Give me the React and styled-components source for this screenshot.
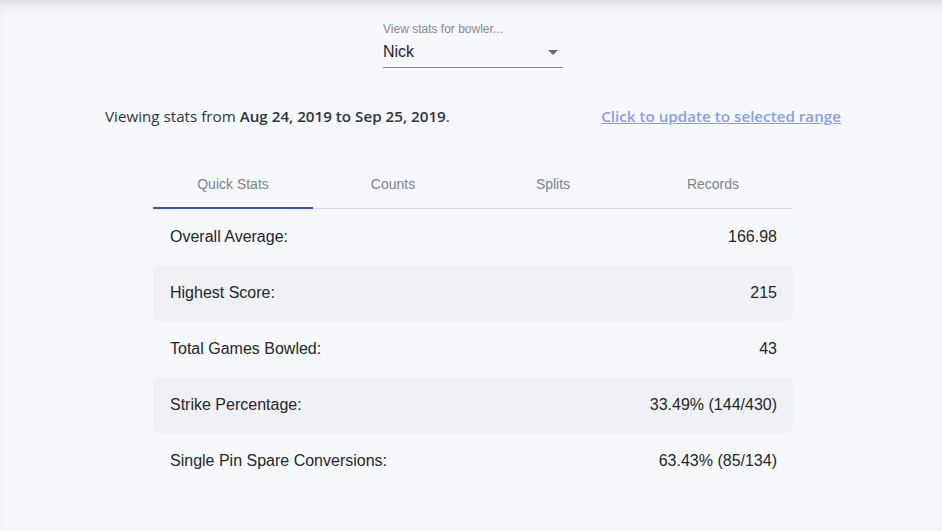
import React, { useState } from 'react';
import styled, { createGlobalStyle } from 'styled-components';

const GlobalStyle = createGlobalStyle`
  html, body {
    margin: 0;
    padding: 0;
    background: #f5f9fc;
  }
  * { box-sizing: border-box; }
`;

const Page = styled.div`
  min-height: 531px;
  background: #f5f9fc;
  box-shadow: inset 0 10px 14px -8px rgba(0, 0, 0, 0.16);
  padding: 22px 0 0 4px;
  font-family: Roboto, "Liberation Sans", Arial, sans-serif;
`;

const SelectWrap = styled.div`
  width: 180px;
  margin: 0 auto;
  display: flex;
  flex-direction: column;
`;

const SelectLabel = styled.label`
  font-size: 12px;
  color: #8a8a8a;
  line-height: 14px;
  font-family: "Liberation Sans", Arial, sans-serif;
`;

const SelectField = styled.div`
  display: flex;
  align-items: center;
  justify-content: space-between;
  height: 32px;
  padding: 1px 0 0;
  border-bottom: 1px solid #8c8c8c;
  font-family: "Liberation Sans", Arial, sans-serif;
  font-size: 16px;
  color: #1f1f1f;
`;

const Caret = styled.span`
  width: 0;
  height: 0;
  margin-right: 5px;
  border-left: 5px solid transparent;
  border-right: 5px solid transparent;
  border-top: 5px solid #6b6b6b;
`;

const RangeBar = styled.div`
  display: flex;
  align-items: center;
  justify-content: space-between;
  padding: 0 101px 0 101px;
  margin-top: 33px;
  height: 30px;
  font-family: "Open Sans", "Liberation Sans", sans-serif;
  font-size: 15.2px;
  color: #2e3440;
`;

const Strong = styled.b`
  font-weight: 600;
`;

const RangeLink = styled.a`
  color: #8b9df0;
  font-weight: 600;
  text-decoration: underline;
  cursor: pointer;
`;

const Panel = styled.div`
  width: 640px;
  margin: 30px auto 0;
`;

const TabList = styled.div`
  display: flex;
  border-bottom: 1px solid #d6dbe1;
`;

const Tab = styled.button`
  flex: 1;
  height: 48px;
  border: none;
  background: transparent;
  font-family: "Liberation Sans", Arial, sans-serif;
  font-size: 14px;
  color: #7d8288;
  padding: 0;
  border-bottom: 2px solid ${p => (p.$active ? '#3f51b5' : 'transparent')};
  margin-bottom: -1px;
  cursor: pointer;
`;

const Row = styled.div`
  display: flex;
  align-items: center;
  justify-content: space-between;
  height: 56px;
  padding: 0 16px 0 17px;
  border-radius: 7px;
  background: ${p => (p.$shaded ? '#eef2f6' : 'transparent')};
  font-family: "Liberation Sans", Arial, sans-serif;
  font-size: 16px;
  color: #262626;
`;

const tabs = ['Quick Stats', 'Counts', 'Splits', 'Records'];

const stats = [
  ['Overall Average:', '166.98'],
  ['Highest Score:', '215'],
  ['Total Games Bowled:', '43'],
  ['Strike Percentage:', '33.49% (144/430)'],
  ['Single Pin Spare Conversions:', '63.43% (85/134)'],
];

const App = () => {
  const [tab, setTab] = useState(0);

  return (
    <Page>
      <GlobalStyle />
      <SelectWrap>
        <SelectLabel>View stats for bowler...</SelectLabel>
        <SelectField>
          <span>Nick</span>
          <Caret />
        </SelectField>
      </SelectWrap>

      <RangeBar>
        <span>
          Viewing stats from <Strong>Aug 24, 2019</Strong> <Strong>to</Strong>{' '}
          <Strong>Sep 25, 2019</Strong>.
        </span>
        <RangeLink>Click to update to selected range</RangeLink>
      </RangeBar>

      <Panel>
        <TabList>
          {tabs.map((t, i) => (
            <Tab key={t} $active={i === tab} onClick={() => setTab(i)}>
              {t}
            </Tab>
          ))}
        </TabList>
        {stats.map(([label, value], i) => (
          <Row key={label} $shaded={i % 2 === 1}>
            <span>{label}</span>
            <span>{value}</span>
          </Row>
        ))}
      </Panel>
    </Page>
  );
};

export default App;
